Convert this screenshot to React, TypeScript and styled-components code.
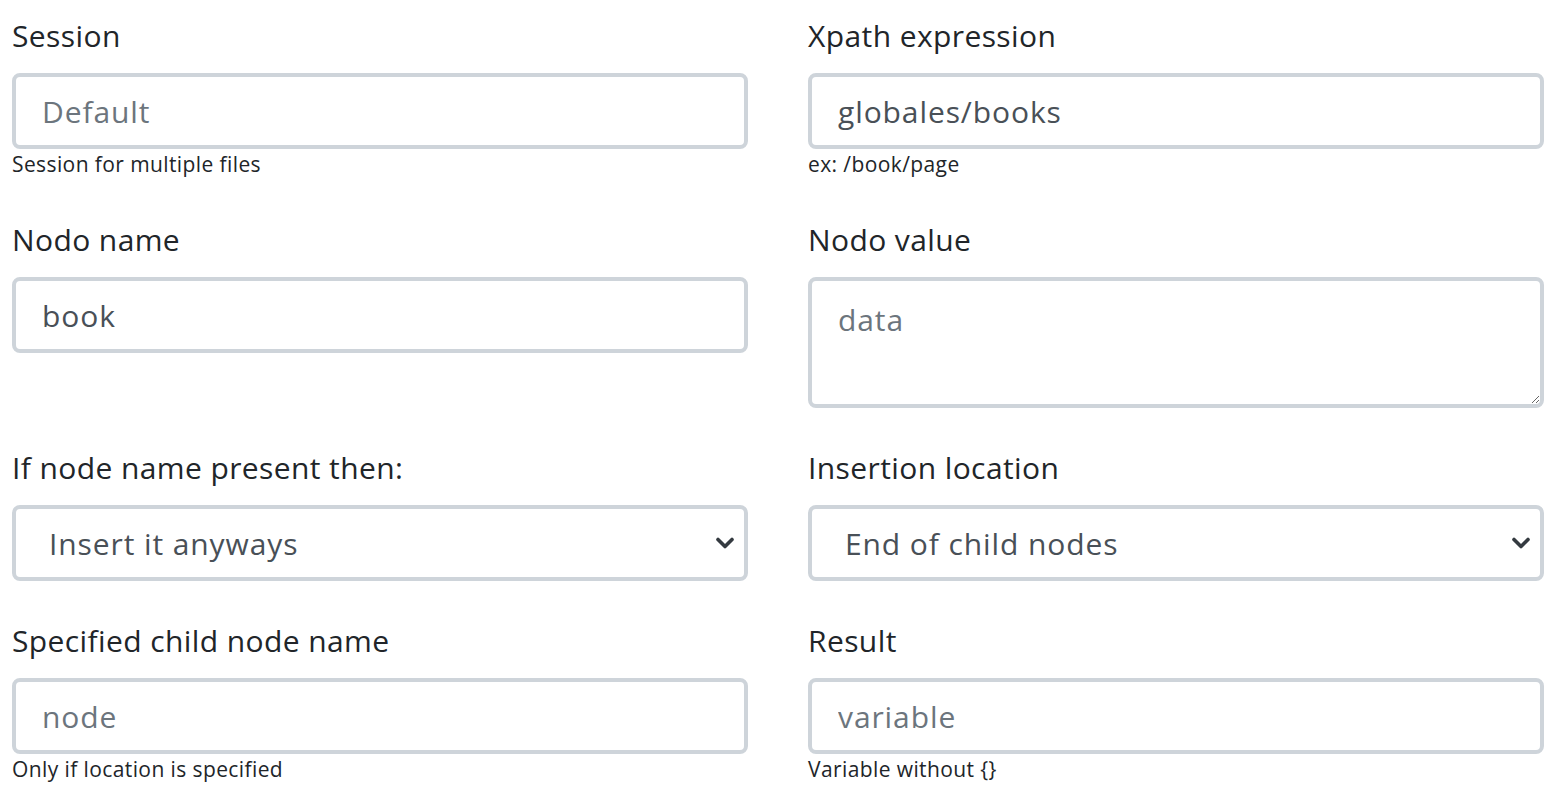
import styled, { createGlobalStyle } from "styled-components"

/* Formulário de inserção de nó XML — duas colunas */

const colors = {
    text: "#212529",
    value: "#495057",
    placeholder: "#6c757d",
    border: "#ced4da",
    chevron: "#343a40",
}

const fontStack = `"Open Sans", "Noto Sans", "Liberation Sans", sans-serif`

const GlobalStyle = createGlobalStyle`
    html, body {
        margin: 0;
        background: #ffffff;
    }
    body {
        font-family: ${fontStack};
        color: ${colors.text};
        letter-spacing: 0.025em;
    }
    * { box-sizing: border-box; }
`

const Form = styled.form`
    display: grid;
    grid-template-columns: 736px 736px;
    column-gap: 60px;
    padding: 13px 0 0 12px;
`

const Field = styled.div`
    display: flex;
    flex-direction: column;
    align-items: stretch;
    padding-bottom: 37px;
`

const Label = styled.label`
    font-size: 30px;
    line-height: 45px;
    margin-bottom: 15px;
    color: ${colors.text};
`

const controlBase = `
    width: 100%;
    font-family: ${fontStack};
    font-size: 30px;
    letter-spacing: 0.03em;
    color: ${colors.value};
    background: #ffffff;
    border: 4px solid ${colors.border};
    border-radius: 8px;
    outline: none;
    margin: 0;
    &::placeholder { color: ${colors.placeholder}; opacity: 1; }
`

const Input = styled.input`
    ${controlBase}
    display: block;
    height: 76px;
    padding: 0 26px;
`

const TextArea = styled.textarea`
    ${controlBase}
    display: block;
    height: 131px;
    padding: 16px 26px;
    line-height: 45px;
    resize: vertical;
`

const SelectWrap = styled.div`
    position: relative;
`

const Select = styled.select`
    ${controlBase}
    display: block;
    height: 76px;
    padding: 0 60px 0 33px;
    appearance: none;
    -webkit-appearance: none;
`

const Chevron = styled.svg`
    position: absolute;
    right: 14px;
    top: 50%;
    transform: translateY(-50%);
    pointer-events: none;
`

const Help = styled.small`
    display: block;
    font-size: 21px;
    line-height: 31px;
    color: ${colors.text};
`

function SelectField({ label, value }: { label: string; value: string }) {
    return (
        <Field>
            <Label>{label}</Label>
            <SelectWrap>
                <Select defaultValue={value}>
                    <option>{value}</option>
                </Select>
                <Chevron width="18" height="12" viewBox="0 0 18 12">
                    <path d="M2 2.5 L9 9.5 L16 2.5" fill="none" stroke={colors.chevron} strokeWidth="3.6" strokeLinecap="round" strokeLinejoin="round" />
                </Chevron>
            </SelectWrap>
        </Field>
    )
}

export default function App() {
    return (
        <>
            <GlobalStyle />
            <Form>
                <Field>
                    <Label>Session</Label>
                    <Input placeholder="Default" />
                    <Help>Session for multiple files</Help>
                </Field>
                <Field>
                    <Label>Xpath expression</Label>
                    <Input defaultValue="globales/books" />
                    <Help>ex: /book/page</Help>
                </Field>

                <Field>
                    <Label>Nodo name</Label>
                    <Input defaultValue="book" />
                </Field>
                <Field>
                    <Label>Nodo value</Label>
                    <TextArea placeholder="data" />
                </Field>

                <SelectField label="If node name present then:" value="Insert it anyways" />
                <SelectField label="Insertion location" value="End of child nodes" />

                <Field>
                    <Label>Specified child node name</Label>
                    <Input placeholder="node" />
                    <Help>Only if location is specified</Help>
                </Field>
                <Field>
                    <Label>Result</Label>
                    <Input placeholder="variable" />
                    <Help>Variable without {"{}"}</Help>
                </Field>
            </Form>
        </>
    )
}
